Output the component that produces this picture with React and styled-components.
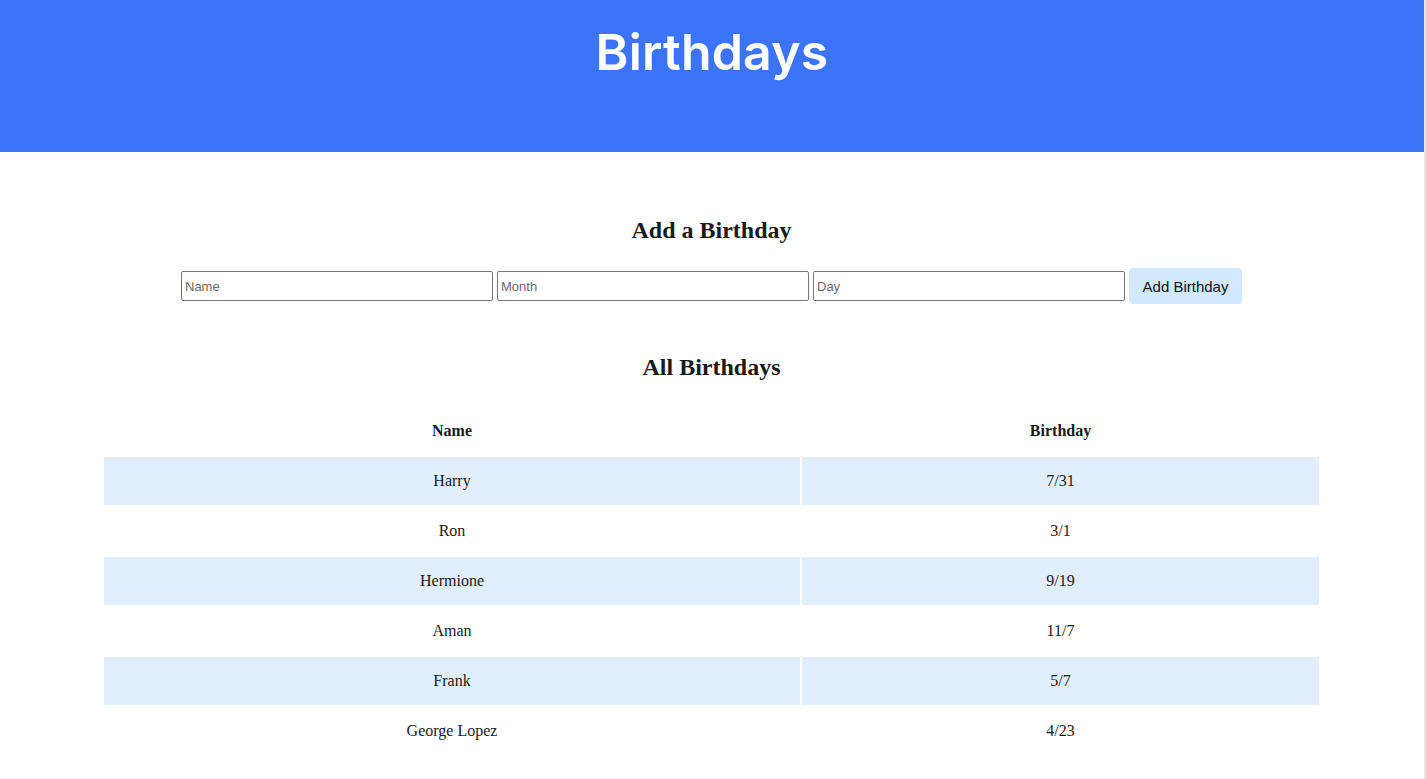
import React from 'react';
import styled, { createGlobalStyle } from 'styled-components';

const GlobalStyle = createGlobalStyle`
  html, body {
    margin: 0;
    padding: 0;
    background: #fff;
  }
  body {
    font-family: "Liberation Serif", "Times New Roman", serif;
    color: #1a1a1a;
  }
`;

const Page = styled.div`
  min-height: 779px;
  border-right: 2px solid #e6e6e6;
  box-sizing: border-box;
`;

const Header = styled.header`
  height: 152px;
  background: #3b73f9;
  display: flex;
  justify-content: center;
  padding-top: 22px;
  box-sizing: border-box;
`;

const Title = styled.h1`
  margin: 0;
  font-family: Inter, "Open Sans", sans-serif;
  font-weight: 600;
  font-size: 50px;
  line-height: 60px;
  color: #fff;
  letter-spacing: 0.2px;
`;

const Main = styled.main`
  display: flex;
  flex-direction: column;
  align-items: center;
  padding-top: 64px;
  padding-right: 1px;
`;

const SectionTitle = styled.h2`
  margin: ${({ $top }) => $top || 0}px 0 0;
  font-size: 24px;
  line-height: 28px;
  font-weight: bold;
  text-align: center;
`;

const Form = styled.form`
  display: flex;
  align-items: center;
  gap: 4px;
  margin-top: 24px;
`;

const Input = styled.input`
  width: 312px;
  height: 30px;
  box-sizing: border-box;
  border: 1px solid #767676;
  border-radius: 2px;
  padding: 0 3px;
  font-family: "Liberation Sans", Arial, sans-serif;
  font-size: 13px;
  color: #222;
  &::placeholder {
    color: #6b6b6b;
  }
`;

const Button = styled.button`
  height: 36px;
  width: 113px;
  border: none;
  border-radius: 4px;
  background: #d2e8fd;
  font-family: "Liberation Sans", Arial, sans-serif;
  font-size: 15px;
  color: #111;
  cursor: pointer;
`;

const Table = styled.table`
  margin-top: 24px;
  border-spacing: 2px;
  font-size: 16px;
`;

const HeadCell = styled.th`
  height: 48px;
  padding: 0;
  text-align: center;
  font-weight: bold;
  width: ${({ $w }) => $w}px;
`;

const Row = styled.tr`
  background: ${({ $shaded }) => ($shaded ? '#e1eefc' : 'transparent')};
`;

const Cell = styled.td`
  height: 48px;
  padding: 0;
  text-align: center;
`;

const birthdays = [
  { name: 'Harry', date: '7/31' },
  { name: 'Ron', date: '3/1' },
  { name: 'Hermione', date: '9/19' },
  { name: 'Aman', date: '11/7' },
  { name: 'Frank', date: '5/7' },
  { name: 'George Lopez', date: '4/23' },
];

export default function App() {
  return (
    <Page>
      <GlobalStyle />
      <Header>
        <Title>Birthdays</Title>
      </Header>
      <Main>
        <SectionTitle>Add a Birthday</SectionTitle>
        <Form onSubmit={(e) => e.preventDefault()}>
          <Input placeholder="Name" />
          <Input placeholder="Month" />
          <Input placeholder="Day" />
          <Button type="submit">Add Birthday</Button>
        </Form>
        <SectionTitle $top={49}>All Birthdays</SectionTitle>
        <Table>
          <thead>
            <tr>
              <HeadCell $w={696}>Name</HeadCell>
              <HeadCell $w={517}>Birthday</HeadCell>
            </tr>
          </thead>
          <tbody>
            {birthdays.map((b, i) => (
              <Row key={b.name} $shaded={i % 2 === 0}>
                <Cell>{b.name}</Cell>
                <Cell>{b.date}</Cell>
              </Row>
            ))}
          </tbody>
        </Table>
      </Main>
    </Page>
  );
}
